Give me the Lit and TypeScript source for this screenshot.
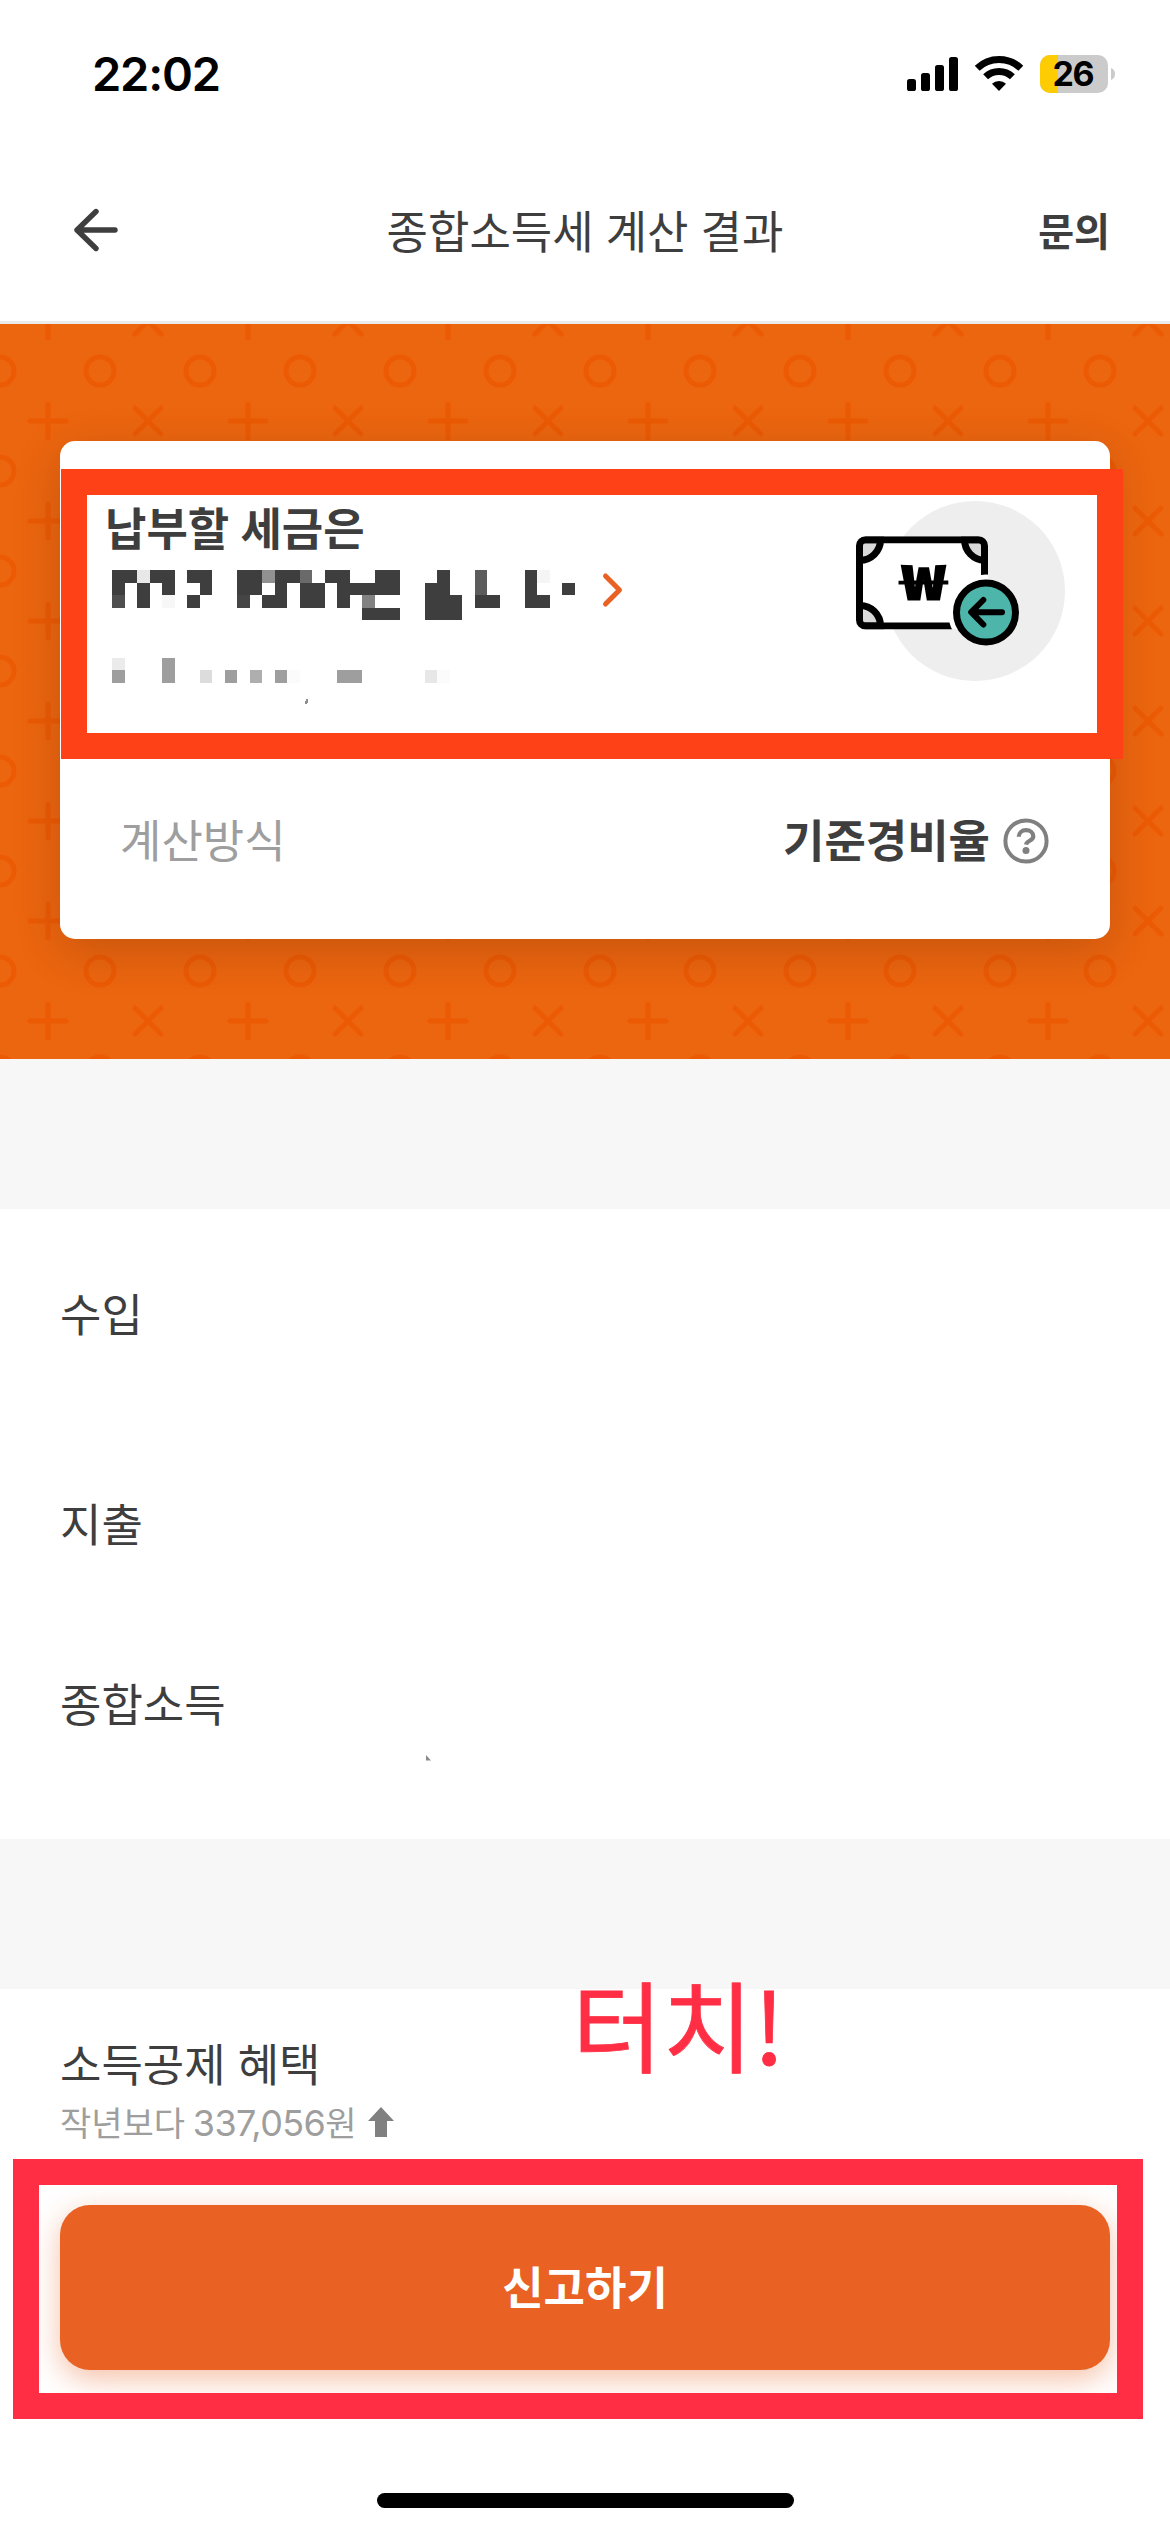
import { LitElement, html, svg, css } from "lit";
import { customElement } from "lit/decorators.js";

const DARK = "#3e3e3e";
const GREY = "#9e9e9e";

// Mosaic cells: [row, first column, cell count, fill]
const CELLS: [number, number, number, string][] = [
  [0, 0, 2, DARK], [0, 2, 1, "#e8e8e8"], [0, 3, 2, DARK], [0, 6, 2, DARK],
  [0, 10, 2, DARK], [0, 12, 1, "#919191"], [0, 13, 2, DARK], [0, 15, 1, "#6a6a6a"],
  [0, 17, 2, DARK], [0, 21, 2, DARK], [0, 26, 1, DARK], [0, 29, 1, "#5c5c5c"],
  [0, 33, 1, DARK], [0, 34, 1, "#f5f5f5"],
  [1, 0, 1, DARK], [1, 2, 1, DARK], [1, 4, 1, DARK], [1, 7, 1, DARK],
  [1, 10, 2, DARK], [1, 13, 1, DARK], [1, 15, 2, DARK], [1, 18, 5, DARK],
  [1, 25, 2, DARK], [1, 29, 1, "#5c5c5c"], [1, 33, 1, DARK], [1, 36, 1, DARK],
  [2, 0, 1, "#4f4f4f"], [2, 2, 1, DARK], [2, 4, 1, "#f7f7f7"], [2, 6, 1, DARK],
  [2, 10, 1, "#454545"], [2, 12, 2, DARK], [2, 15, 2, DARK], [2, 18, 1, DARK],
  [2, 20, 1, "#828282"], [2, 25, 3, DARK], [2, 29, 2, DARK], [2, 33, 2, DARK],
  [3, 20, 3, DARK], [3, 25, 3, DARK],
  [7, 0, 1, "#ebebeb"], [7, 4, 1, GREY],
  [8, 0, 1, GREY], [8, 4, 1, GREY], [8, 7, 1, "#dcdcdc"], [8, 9, 1, GREY],
  [8, 11, 1, "#aeaeae"], [8, 13, 1, GREY], [8, 14, 1, "#fbfbfb"],
  [8, 18, 2, GREY], [8, 25, 1, "#e7e7e7"], [8, 26, 1, "#fbfbfb"],
];

@customElement("status-bar")
class StatusBar extends LitElement {
  static styles = css`
    :host {
      display: flex;
      justify-content: space-between;
      align-items: flex-start;
      height: 139px;
      box-sizing: border-box;
      padding: 44px 54px 0 92px;
      font-family: Inter, "Liberation Sans", sans-serif;
      color: #000;
    }
    .time {
      font-size: 47px;
      font-weight: 600;
      line-height: 60px;
      letter-spacing: -1.2px;
    }
    .icons {
      display: block;
      margin-top: 6px;
    }
    .level {
      font-size: 34px;
      font-weight: 700;
    }
  `;
  render() {
    return html`
      <div class="time">22:02</div>
      <svg class="icons" width="210" height="48" viewBox="906 50 210 48">
        <rect x="907" y="79" width="9" height="12" rx="2.6" />
        <rect x="921" y="73" width="9" height="18" rx="2.6" />
        <rect x="935" y="65" width="9" height="26" rx="2.6" />
        <rect x="949" y="57" width="9" height="34" rx="2.6" />
        <g fill="none" stroke="#000" stroke-width="7">
          <path d="M977.2 68.3a31.5 31.5 0 0 1 43.6 0" />
          <path d="M985.6 76.8a19.4 19.4 0 0 1 26.8 0" />
        </g>
        <path d="M999 91l-7-7.2a10 10 0 0 1 14 0z" />
        <clipPath id="cell"><rect x="1040" y="55" width="68" height="38" rx="10" /></clipPath>
        <g clip-path="url(#cell)">
          <rect x="1040" y="55" width="68" height="38" fill="#cbcbcb" />
          <rect x="1040" y="55" width="18" height="38" fill="#fecc02" />
        </g>
        <path d="M1111 68q4 1.5 4 6t-4 6z" fill="#cbcbcb" />
        <text class="level" x="1073.5" y="86" text-anchor="middle" textLength="42">26</text>
      </svg>
    `;
  }
}

@customElement("nav-bar")
class NavBar extends LitElement {
  static styles = css`
    :host {
      display: grid;
      grid-template-columns: 200px 1fr 200px;
      align-items: center;
      height: 185px;
      box-sizing: border-box;
      border-bottom: 3px solid #ebebeb;
      padding: 0 60px;
      color: #3e3e3e;
    }
    .back {
      display: block;
      margin-left: 12px;
    }
    .title {
      font-size: 45px;
      line-height: 60px;
      text-align: center;
      white-space: nowrap;
      word-spacing: 2px;
    }
    .ask {
      font-size: 39px;
      font-weight: 700;
      line-height: 54px;
      padding-bottom: 2px;
      text-align: right;
    }
  `;
  render() {
    return html`
      <svg class="back" width="48" height="48" viewBox="0 0 48 48" fill="none" stroke="#3e3e3e"
        stroke-width="5.4" stroke-linecap="round" stroke-linejoin="round">
        <path d="M43 24H5M24 5.5L5 24l19 18.5" />
      </svg>
      <div class="title">종합소득세 계산 결과</div>
      <div class="ask">문의</div>
    `;
  }
}

@customElement("tax-card")
class TaxCard extends LitElement {
  static styles = css`
    :host {
      display: block;
      position: relative;
      height: 498px;
      border-radius: 15px;
      background: #fff;
      box-shadow: 0 12px 48px rgba(0, 0, 0, 0.16);
      color: #3e3e3e;
    }
    .summary {
      display: flex;
      justify-content: space-between;
      height: 298px;
      box-sizing: border-box;
      padding: 56px 44px 0 45px;
    }
    .headline {
      font-size: 45px;
      font-weight: 700;
      line-height: 60px;
      word-spacing: 1px;
    }
    .amount {
      display: flex;
      align-items: flex-start;
      gap: 25px;
      margin: 13px 0 0 7px;
    }
    .chevron {
      margin-top: 1px;
    }
    .bill {
      display: block;
      margin-top: 3px;
    }
    .won {
      font-family: "Noto Sans CJK KR", sans-serif;
      font-size: 48px;
      font-weight: 700;
      stroke: #000;
      stroke-width: 1.2px;
    }
    .method {
      display: flex;
      justify-content: space-between;
      align-items: center;
      height: 200px;
      box-sizing: border-box;
      padding: 0 61px 0 60px;
      font-size: 45px;
      line-height: 60px;
    }
    .label {
      color: #9e9e9e;
    }
    .value {
      display: flex;
      align-items: center;
      gap: 13px;
      font-weight: 700;
    }
    .help {
      display: block;
      margin-top: 3px;
    }
    .frame {
      position: absolute;
      left: 1px;
      top: 28px;
      width: 1062px;
      height: 290px;
      box-sizing: border-box;
      border: 26px solid #ff4118;
    }
  `;
  render() {
    const mosaic = CELLS.map(
      ([r, c, n, fill]) =>
        svg`<rect x=${c * 12.5} y=${r * 12.5} width=${n * 12.5} height="12.5" fill=${fill} />`
    );
    return html`
      <div class="summary">
        <div>
          <div class="headline">납부할 세금은</div>
          <div class="amount">
            <svg width="463" height="136" viewBox="0 0 463 136" shape-rendering="crispEdges">
              ${mosaic}
              <path d="M194 129h2.5l-1 4.5h-2.5z" fill="#8c8c8c" />
            </svg>
            <svg class="chevron" width="26" height="40" viewBox="0 0 26 40" fill="none"
              stroke="#e96223" stroke-width="5" stroke-linecap="round" stroke-linejoin="round">
              <path d="M5.5 5L19.5 19L5.5 33" />
            </svg>
          </div>
        </div>
        <svg class="bill" width="212" height="184" viewBox="854 500 212 184">
          <mask id="cut">
            <rect x="856" y="536.3" width="132" height="93.2" rx="9.5" fill="#fff" />
            <circle cx="986" cy="612.5" r="38" fill="#000" />
          </mask>
          <circle cx="975" cy="591" r="90" fill="#eeeeee" />
          <rect x="857" y="537" width="131" height="92" rx="8" fill="#fff" />
          <g mask="url(#cut)" fill="#d9d9d9" stroke="#000" stroke-width="7">
            <path d="M859.5 539.8h21a20.5 20.5 0 0 1-21 20.5z" />
            <path d="M984.5 539.8h-20a20.5 20.5 0 0 0 20 20.5z" />
            <path d="M859.5 626h21a20.5 20.5 0 0 0-21-20.5z" />
            <rect x="859.5" y="539.8" width="125" height="86.2" rx="6" fill="none" />
          </g>
          <text class="won" x="901" y="600" textLength="45" lengthAdjust="spacingAndGlyphs">₩</text>
          <circle cx="986" cy="612.5" r="29.5" fill="#4db5aa" stroke="#000" stroke-width="7" />
          <path d="M1002 612.2H971.5M983.3 600L971.2 612.2L983.3 624.5" fill="none" stroke="#000"
            stroke-width="6" stroke-linecap="round" stroke-linejoin="round" />
        </svg>
      </div>
      <div class="method">
        <span class="label">계산방식</span>
        <span class="value">
          기준경비율
          <svg class="help" width="46" height="46" viewBox="0 0 46 46" fill="none" stroke="#808080">
            <circle cx="23" cy="23" r="20.6" stroke-width="4" />
            <path d="M15.8 18.8c0-4 3.1-6.7 7.2-6.7s7.3 2.7 7.3 6.4c0 4.2-6.6 4.2-7.3 8.2" stroke-width="4.2" />
            <circle cx="23" cy="32.6" r="3.5" fill="#808080" stroke="none" />
          </svg>
        </span>
      </div>
      <div class="frame"></div>
    `;
  }
}

@customElement("app-root")
class AppRoot extends LitElement {
  static styles = css`
    :host {
      display: block;
      position: relative;
      width: 1170px;
      height: 2532px;
      overflow: hidden;
      background: #fff;
      color: #3e3e3e;
      font-family: "Noto Sans CJK KR", sans-serif;
    }
    .hero {
      position: relative;
      height: 735px;
      box-sizing: border-box;
      padding: 117px 60px 0;
      background: #ec650f;
      overflow: hidden;
    }
    .pattern {
      position: absolute;
      inset: 0;
    }
    .band {
      height: 150px;
      background: #f7f7f7;
    }
    .rows {
      height: 630px;
      box-sizing: border-box;
      padding: 74px 60px 0;
      font-size: 45px;
      line-height: 60px;
    }
    .income {
      margin-bottom: 150px;
    }
    .expense {
      margin-bottom: 120px;
    }
    .speck {
      display: block;
      margin: 22px 0 0 366px;
    }
    .benefit {
      height: 216px;
      box-sizing: border-box;
      padding: 44px 60px 0;
    }
    .name {
      font-size: 45px;
      line-height: 60px;
      word-spacing: 2px;
    }
    .change {
      display: flex;
      align-items: center;
      gap: 10px;
      margin-top: 4px;
      font-size: 34px;
      line-height: 50px;
      color: #9e9e9e;
      white-space: nowrap;
    }
    .digits {
      font-family: Inter, sans-serif;
      font-size: 36px;
      line-height: 1;
      letter-spacing: -0.6px;
    }
    .submit {
      display: flex;
      justify-content: center;
      align-items: center;
      width: 1050px;
      height: 165px;
      box-sizing: border-box;
      margin: 0 60px;
      padding: 0 0 4px;
      border: 0;
      border-radius: 30px;
      background: #e96223;
      box-shadow: 0 9px 30px rgba(233, 98, 35, 0.4);
      color: #fff;
      font: 700 45px/60px "Noto Sans CJK KR", sans-serif;
    }
    .home {
      width: 417px;
      height: 15px;
      margin: 123px auto 0;
      border-radius: 8px;
      background: #000;
    }
    .frame {
      position: absolute;
      left: 13px;
      top: 2159px;
      width: 1130px;
      height: 260px;
      box-sizing: border-box;
      border: 26px solid #ff2e44;
    }
    .note {
      position: absolute;
      left: 572px;
      top: 1951px;
      font-size: 98.5px;
      line-height: 142px;
      color: #ff2e44;
      white-space: nowrap;
      -webkit-text-stroke: 0.8px #ff2e44;
    }
  `;
  render() {
    return html`
      <status-bar></status-bar>
      <nav-bar></nav-bar>
      <div class="hero">
        <svg class="pattern" width="1170" height="735">
          <defs>
            <pattern id="marks" width="200" height="100" patternUnits="userSpaceOnUse" y="-3">
              <g fill="none" stroke="#ec5a04" stroke-width="5" stroke-linecap="round">
                <circle cx="0" cy="50" r="14" />
                <circle cx="100" cy="50" r="14" />
                <circle cx="200" cy="50" r="14" />
                <path d="M48 -17V17M48 83V117M30 0H66M30 100H66" />
                <path d="M135 -13L161 13M161 -13L135 13M135 87L161 113M161 87L135 113" />
              </g>
            </pattern>
          </defs>
          <rect width="1170" height="735" fill="url(#marks)" />
        </svg>
        <tax-card></tax-card>
      </div>
      <div class="band"></div>
      <div class="rows">
        <div class="income">수입</div>
        <div class="expense">지출</div>
        <div>종합소득</div>
        <svg class="speck" width="5" height="6"><path d="M0 0L5 5.5H0z" fill="#8a8a8a" /></svg>
      </div>
      <div class="band"></div>
      <div class="benefit">
        <div class="name">소득공제 혜택</div>
        <div class="change">
          <span>작년보다 <span class="digits">337,056</span>원</span>
          <svg width="28" height="32" viewBox="0 0 28 32"><path d="M14 1L27 15H20V31H8V15H1z" fill="#808080" /></svg>
        </div>
      </div>
      <button class="submit">신고하기</button>
      <div class="home"></div>
      <div class="note">터치!</div>
      <div class="frame"></div>
    `;
  }
}
